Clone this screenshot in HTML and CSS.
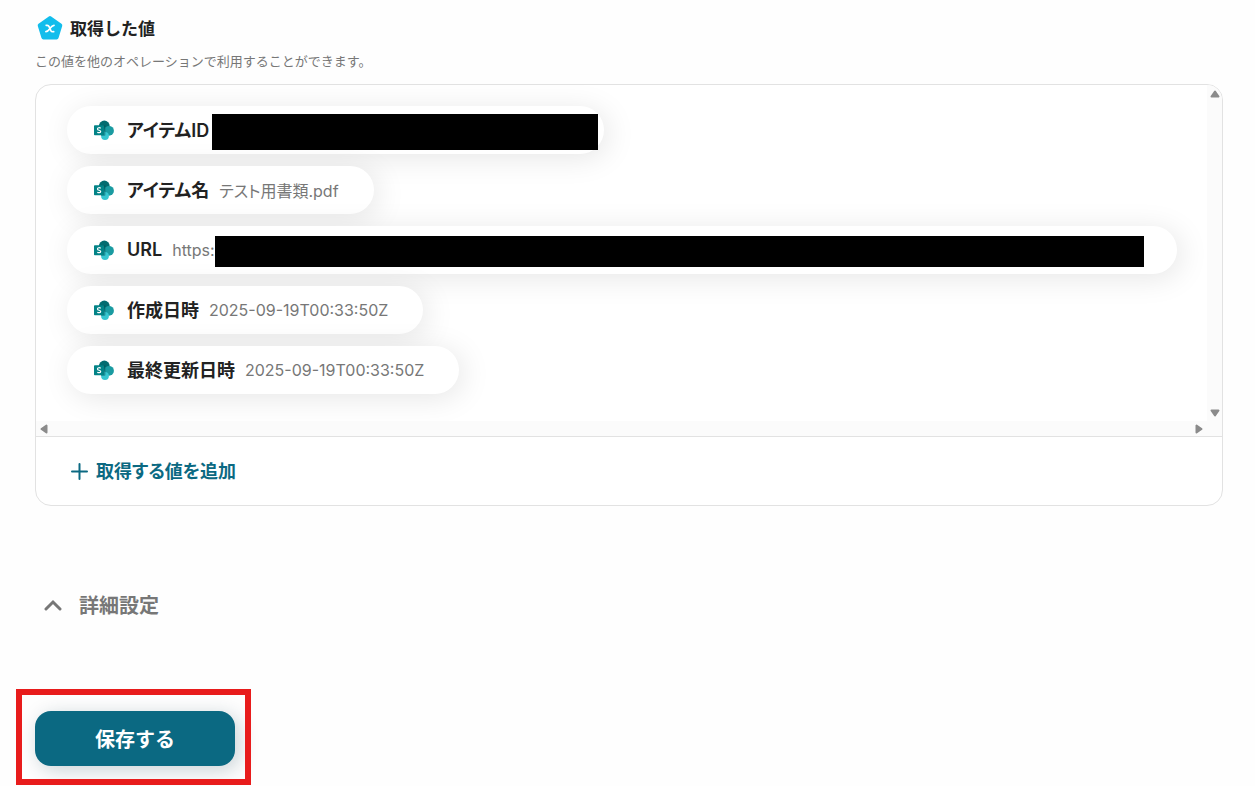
FILE: index.html
```html
<!DOCTYPE html>
<html lang="ja">
<head>
    <meta charset="UTF-8">
    <title>取得した値</title>
<link rel="stylesheet" href="styles.css">
</head>
<body>
    <svg class="defs" width="0" height="0" aria-hidden="true">
        <symbol id="sharepoint" viewBox="0 0 20 20">
            <circle cx="10.3" cy="6" r="5.4" fill="#036c70"/>
            <circle cx="15" cy="10.8" r="4.9" fill="#1a9ba1"/>
            <circle cx="11" cy="16" r="3.9" fill="#37c6d0"/>
            <path d="M5 5.2h5.6q.8 0 .8.8v9q0 .8-.8.8H7V14H5z" fill="#025356" opacity=".45"/>
            <rect x="0" y="5.2" width="10" height="10" rx=".8" fill="#038387"/>
            <path d="M6.8 8.2C5.5 7.4 3.5 7.6 3.5 8.9c0 1.7 3.2 1 3.2 2.6 0 1.3-2.2 1.5-3.4.7" fill="none" stroke="#fff" stroke-width="1.2"/>
        </symbol>
    </svg>

    <div class="page">
    <h2 class="title">
        <svg width="26" height="26" viewBox="0 0 26 26" aria-hidden="true">
            <path d="M13 3 23.3 10.4 19.6 22.5H6.4L2.7 10.4z" fill="#12bdec" stroke="#12bdec" stroke-width="4" stroke-linejoin="round"/>
            <path d="M9.2 10.4c1.5-.4 2.4 0 3 1.4l1.5 3.6c.6 1.3 1.5 1.6 3 1.2M17 10.3c-1.7.1-2.7 1.2-3.9 2.9s-2.3 3.4-4.2 3.5" fill="none" stroke="#fff" stroke-width="1.7" stroke-linecap="round"/>
        </svg>
        <span>取得した値</span>
    </h2>
    <p class="note">この値を他のオペレーションで利用することができます。</p>

    <div class="panel">
        <div class="viewer">
            <ul class="values">
                <li class="pill pill-cut"><svg class="icon"><use href="#sharepoint"/></svg><b>アイテムID</b><span class="mask mask-id"></span></li>
                <li class="pill"><svg class="icon"><use href="#sharepoint"/></svg><b>アイテム名</b><span class="value">テスト用書類.pdf</span></li>
                <li class="pill pill-long"><svg class="icon"><use href="#sharepoint"/></svg><b>URL</b><span class="value">https:</span><span class="mask"></span></li>
                <li class="pill"><svg class="icon"><use href="#sharepoint"/></svg><b>作成日時</b><span class="value">2025-09-19T00:33:50Z</span></li>
                <li class="pill"><svg class="icon"><use href="#sharepoint"/></svg><b>最終更新日時</b><span class="value">2025-09-19T00:33:50Z</span></li>
            </ul>
            <div class="track track-v">
                <svg width="10" height="8" viewBox="0 0 10 8"><path d="M5 1.5 8.5 6.5h-7z"/></svg>
                <svg width="10" height="8" viewBox="0 0 10 8"><path d="M5 6.5 8.5 1.5h-7z"/></svg>
            </div>
            <div class="track track-h">
                <svg width="8" height="10" viewBox="0 0 8 10"><path d="M1.5 5 6.5 1.5v7z"/></svg>
                <svg width="8" height="10" viewBox="0 0 8 10"><path d="M6.5 5 1.5 1.5v7z"/></svg>
            </div>
        </div>
        <div class="panel-foot">
            <button type="button" class="add">
                <svg width="17" height="17" viewBox="0 0 17 17" aria-hidden="true"><path d="M8.5 1v15M1 8.5h15"/></svg>
                <span>取得する値を追加</span>
            </button>
        </div>
    </div>

    <button type="button" class="detail">
        <svg width="18" height="12" viewBox="0 0 18 12" aria-hidden="true"><path d="M2 10 9 3l7 7"/></svg>
        <span>詳細設定</span>
    </button>

    <div class="actions">
        <button type="button" class="save">保存する</button>
        <div class="frame"></div>
    </div>
    </div>
</body>
</html>
```
FILE: styles.css
```css
* {
    box-sizing: border-box;
}
body {
    margin: 0;
    background: #fefefe;
    color: #222;
    font-family: Inter, "Noto Sans CJK JP", sans-serif;
}
button {
    border: 0;
    padding: 0;
    background: none;
    font: inherit;
    cursor: pointer;
}
.defs {
    position: absolute;
}
.page {
    padding: 14px 32px 20px 35px;
}
.title {
    display: flex;
    align-items: center;
    gap: 7px;
    height: 28px;
    margin: 0;
    padding-left: 2px;
    font-size: 17px;
    font-weight: 600;
}
.title span,
.pill b,
.add span,
.detail span {
    padding-bottom: 2px;
}
.note {
    margin: 9px 0 13px;
    font-size: 13px;
    line-height: 20px;
    color: #777;
}

/* value list */
.panel {
    border: 1px solid #e2e2e2;
    border-radius: 16px;
    background: #fff;
    overflow: hidden;
}
.viewer {
    display: grid;
    grid-template-columns: 1fr 15px;
    border-bottom: 1px solid #e2e2e2;
}
.values {
    display: flex;
    flex-direction: column;
    align-items: flex-start;
    gap: 12px;
    margin: 0;
    padding: 21px 30px 27px 31px;
    list-style: none;
    overflow: hidden;
}
.pill {
    display: flex;
    align-items: center;
    height: 48px;
    padding: 0 35px 0 27px;
    border-radius: 24px;
    background: #fff;
    box-shadow: 4px 4px 30px rgba(0, 0, 0, .1);
    white-space: nowrap;
}
.pill b {
    margin: 0 10px 0 13px;
    font-size: 18px;
    font-weight: 600;
    font-feature-settings: "palt";
}
.pill-cut {
    padding-right: 6px;
}
.pill-cut b {
    margin-right: 3px;
}
.pill-long {
    width: 100%;
    padding-right: 33px;
}
.icon {
    width: 20px;
    height: 20px;
}
.value {
    font-size: 16px;
    font-feature-settings: "palt";
    color: #777;
}
.mask {
    flex: 1;
    height: 31px;
    margin-top: 3px;
    background: #000;
}
.mask-id {
    flex: none;
    width: 386px;
    height: 36px;
}
.track {
    display: flex;
    justify-content: space-between;
    align-items: center;
    background: #fbfbfb;
}
.track svg {
    fill: #8b8b8b;
    stroke: #8b8b8b;
    stroke-width: 2;
    stroke-linejoin: round;
}
.track-v {
    flex-direction: column;
    padding: 5px 0 4px;
}
.track-h {
    grid-column: 1 / 3;
    height: 15px;
    padding: 0 19px 0 4px;
}
.panel-foot {
    padding: 20px 35px;
}
.add {
    display: flex;
    align-items: center;
    gap: 8px;
    height: 28px;
    color: #0b6982;
    font-size: 18px;
    font-weight: 600;
    font-feature-settings: "palt";
}
.add svg,
.detail svg {
    fill: none;
    stroke: currentColor;
    stroke-width: 2;
    stroke-linecap: round;
}

.detail {
    display: flex;
    align-items: center;
    gap: 17px;
    height: 32px;
    margin: 83px 0 90px 9px;
    color: #777;
    font-size: 20px;
    font-weight: 600;
}
.detail svg {
    stroke-width: 3;
}

/* save */
.actions {
    position: relative;
    width: 200px;
}
.save {
    width: 100%;
    height: 55px;
    border-radius: 16px;
    background: #0b6982;
    box-shadow: 4px 4px 20px rgba(11, 50, 70, .22);
    color: #fff;
    font-size: 20px;
    font-weight: 700;
}
.frame {
    position: absolute;
    top: -22px;
    right: -16px;
    bottom: -19px;
    left: -19px;
    border: 6px solid #e81c1c;
    pointer-events: none;
}
```
